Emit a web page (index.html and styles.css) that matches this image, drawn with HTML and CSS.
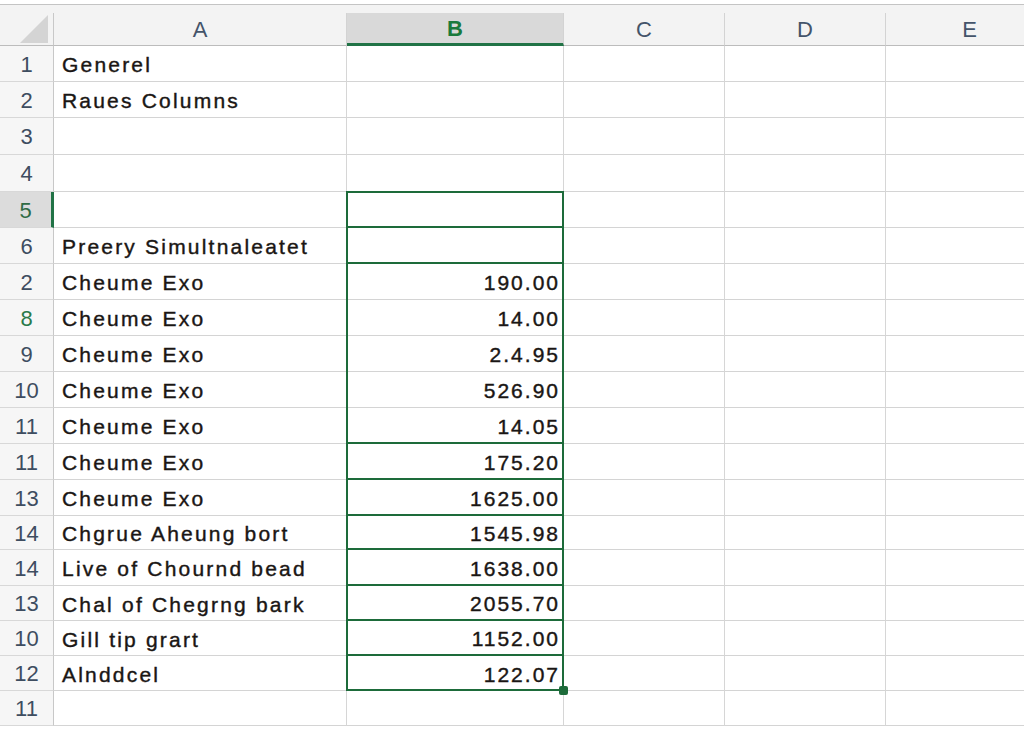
FILE: index.html
```html
<!DOCTYPE html>
<html>
<head>
<meta charset="utf-8">
<link rel="stylesheet" href="styles.css">
</head>
<body>
<div class="sheet">
  <div class="topline"></div>
  <div class="strip"></div>
  <div class="grid">
    <div class="ch corner"><div class="tri"></div></div>
    <div class="ch">A</div>
    <div class="ch chsel">B</div>
    <div class="ch">C</div>
    <div class="ch">D</div>
    <div class="ch">E</div>

    <div class="rh">1</div><div class="c">Generel</div><div class="c"></div><div class="c"></div><div class="c"></div><div class="c"></div>
    <div class="rh">2</div><div class="c">Raues Columns</div><div class="c"></div><div class="c"></div><div class="c"></div><div class="c"></div>
    <div class="rh">3</div><div class="c"></div><div class="c"></div><div class="c"></div><div class="c"></div><div class="c"></div>
    <div class="rh">4</div><div class="c"></div><div class="c"></div><div class="c"></div><div class="c"></div><div class="c"></div>
    <div class="rh rhsel">5</div><div class="c"></div><div class="c n g"></div><div class="c"></div><div class="c"></div><div class="c"></div>
    <div class="rh">6</div><div class="c">Preery Simultnaleatet</div><div class="c n g"></div><div class="c"></div><div class="c"></div><div class="c"></div>
    <div class="rh">2</div><div class="c">Cheume Exo</div><div class="c n">190.00</div><div class="c"></div><div class="c"></div><div class="c"></div>
    <div class="rh green">8</div><div class="c">Cheume Exo</div><div class="c n">14.00</div><div class="c"></div><div class="c"></div><div class="c"></div>
    <div class="rh">9</div><div class="c">Cheume Exo</div><div class="c n">2.4.95</div><div class="c"></div><div class="c"></div><div class="c"></div>
    <div class="rh">10</div><div class="c">Cheume Exo</div><div class="c n">526.90</div><div class="c"></div><div class="c"></div><div class="c"></div>
    <div class="rh">11</div><div class="c">Cheume Exo</div><div class="c n g">14.05</div><div class="c"></div><div class="c"></div><div class="c"></div>
    <div class="rh">11</div><div class="c">Cheume Exo</div><div class="c n g">175.20</div><div class="c"></div><div class="c"></div><div class="c"></div>
    <div class="rh">13</div><div class="c">Cheume Exo</div><div class="c n g">1625.00</div><div class="c"></div><div class="c"></div><div class="c"></div>
    <div class="rh">14</div><div class="c">Chgrue Aheung bort</div><div class="c n g">1545.98</div><div class="c"></div><div class="c"></div><div class="c"></div>
    <div class="rh">14</div><div class="c">Live of Chournd bead</div><div class="c n g">1638.00</div><div class="c"></div><div class="c"></div><div class="c"></div>
    <div class="rh">13</div><div class="c">Chal of Chegrng bark</div><div class="c n g">2055.70</div><div class="c"></div><div class="c"></div><div class="c"></div>
    <div class="rh">10</div><div class="c">Gill tip grart</div><div class="c n g">1152.00</div><div class="c"></div><div class="c"></div><div class="c"></div>
    <div class="rh">12</div><div class="c">Alnddcel</div><div class="c n">122.07</div><div class="c"></div><div class="c"></div><div class="c"></div>
    <div class="rh">11</div><div class="c"></div><div class="c"></div><div class="c"></div><div class="c"></div><div class="c"></div>

    <div class="selbox"><div class="handle"></div></div>
  </div>
</div>
</body>
</html>
```
FILE: styles.css
```css
* { box-sizing: border-box; }
html, body { margin: 0; padding: 0; background: #ffffff; }
body { width: 1024px; height: 733px; overflow: hidden; font-family: "Liberation Sans", Arial, sans-serif; }

.sheet { width: 1024px; overflow: hidden; }
.topline { height: 5px; background: #ffffff; border-bottom: 1px solid #c4c4c4; }
.strip { height: 8px; background: #f3f3f3; }

.grid {
  position: relative;
  display: grid;
  grid-template-columns: 54px 293px 217px 161px 161px 168px;
  grid-template-rows: 33px 36px 36px 37px 37px 36px 36px 36px 36px 36px 36px 36px 36px 36px 34px 36px 35px 35px 35px 35px;
}

.ch {
  background: #f3f3f3;
  border-right: 1px solid #d3d3d3;
  border-bottom: 1px solid #bcbcbc;
  display: flex;
  align-items: center;
  justify-content: center;
  font-size: 22px;
  color: #44546a;
  padding-top: 2px;
}
.corner { position: relative; border-right: 1px solid #c8c8c8; }
.tri {
  position: absolute;
  left: 20px;
  top: 2px;
  width: 28px;
  height: 28px;
  background: #d4d4d4;
  clip-path: polygon(100% 0, 100% 100%, 0 100%);
}
.chsel {
  background: #d9d9d9;
  border-bottom: 3px solid #217346;
  color: #1a7a3c;
  font-weight: bold;
}

.rh {
  background: #f6f6f6;
  border-right: 1px solid #c8c8c8;
  border-bottom: 1px solid #d8d8d8;
  display: flex;
  align-items: center;
  justify-content: center;
  font-size: 22px;
  color: #3e4d60;
  padding-top: 2px;
}
.rhsel {
  background: #dcdcdc;
  border-right: 3px solid #217346;
  color: #2f6b45;
}
.green { color: #2a7a4a; }

.c {
  border-right: 1px solid #d6d6d6;
  border-bottom: 1px solid #d4d4d4;
  display: flex;
  align-items: center;
  padding: 3px 0 0 8px;
  font-size: 21px;
  letter-spacing: 2.2px;
  color: #1a1614;
  -webkit-text-stroke: 0.4px #1a1614;
  white-space: nowrap;
}
.n { justify-content: flex-end; padding: 3px 3px 0 0; letter-spacing: 2px; }
.g { border-bottom: 2px solid #1d6b3a; }

.selbox {
  position: absolute;
  grid-column: 3 / 4;
  grid-row: 6 / 20;
  top: -1px;
  left: -1px;
  right: 0;
  bottom: 0;
  border: 2px solid #1d6b3a;
  pointer-events: none;
  z-index: 2;
}
.handle {
  position: absolute;
  right: -6px;
  bottom: -6px;
  width: 9px;
  height: 9px;
  background: #1d6b3a;
  border-radius: 2px;
}
```
